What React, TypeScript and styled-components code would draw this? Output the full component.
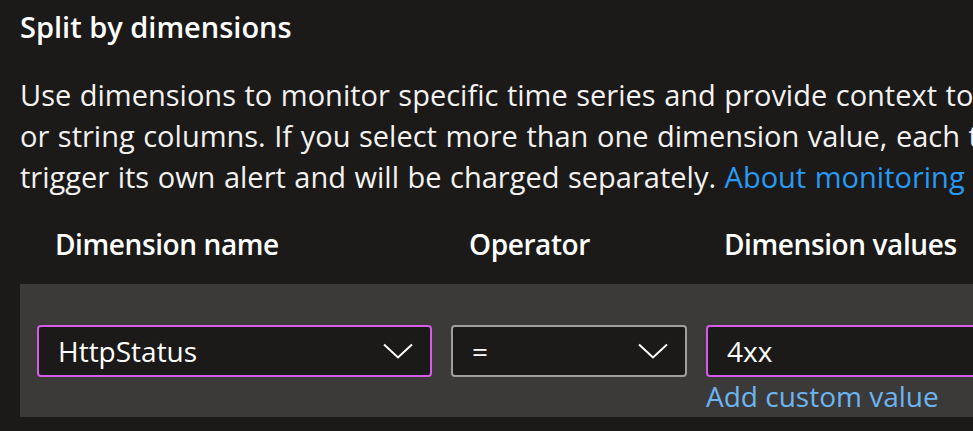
import React from "react";
import styled, { createGlobalStyle } from "styled-components";

const GlobalStyle = createGlobalStyle`
  html, body {
    margin: 0;
    padding: 0;
    background: #1b1a19;
    overflow: hidden;
  }
  body {
    font-family: "Open Sans", "Noto Sans", sans-serif;
    color: #ffffff;
  }
`;

const FS = 29;

const Page = styled.div`
  width: 973px;
  height: 431px;
  overflow: hidden;
  padding: 6px 0 0 20px;
  box-sizing: border-box;
  font-size: ${FS}px;
`;

const Title = styled.h2`
  margin: 0;
  font-size: ${FS}px;
  font-weight: 600;
  line-height: 41px;
  white-space: nowrap;
`;

const Description = styled.p`
  margin: 27px 0 0;
  font-size: ${FS}px;
  line-height: 41px;
  white-space: nowrap;
  color: #f3f2f1;
  word-spacing: 1px;
`;

const Link = styled.a<{ $light?: boolean }>`
  color: ${(p) => (p.$light ? "#6cb4f2" : "#2899f5")};
  text-decoration: none;
  cursor: pointer;
`;

const Grid = styled.div`
  display: grid;
  grid-template-columns: 395px 236px 400px;
  column-gap: 19px;
  padding: 0 17px;
`;

const HeaderRow = styled(Grid)`
  margin-top: 27px;
`;

const HeaderCell = styled.div`
  font-weight: 600;
  font-size: 28px;
  letter-spacing: -0.4px;
  line-height: 41px;
  padding-left: 18px;
  white-space: nowrap;
`;

const Panel = styled.div`
  margin-top: 19px;
  background: #3b3a39;
  height: 133px;
  padding-top: 41px;
  box-sizing: border-box;
`;

const FieldBox = styled.div<{ $focused?: boolean }>`
  height: 52px;
  box-sizing: border-box;
  border: 2px solid ${(p) => (p.$focused ? "#d35ce9" : "#a19f9d")};
  border-radius: 4px;
  background: #1b1a19;
  display: flex;
  align-items: center;
  padding: 0 17px 0 19px;
  line-height: 48px;
  font-size: 28px;
  white-space: nowrap;
`;

const Value = styled.span`
  flex: 1;
  overflow: hidden;
`;

const Column = styled.div`
  display: flex;
  flex-direction: column;
`;

const Helper = styled.div`
  line-height: 38px;
  font-size: 28px;
  white-space: nowrap;
`;

const Chevron = () => (
  <svg width="30" height="16" viewBox="0 0 30 16" fill="none">
    <path d="M1 1.5 L15 14.5 L29 1.5" stroke="#ffffff" strokeWidth="2" />
  </svg>
);

export default function App() {
  return (
    <>
      <GlobalStyle />
      <Page>
        <Title>Split by dimensions</Title>
        <Description>
          Use dimensions to monitor specific time series and provide context to the fired alert. Dimensions can be either number
          <br />
          or string columns. If you select more than one dimension value, each time series that results from the combination will
          <br />
          trigger its own alert and will be charged separately. <Link>About monitoring multiple time series</Link>
        </Description>
        <HeaderRow>
          <HeaderCell>Dimension name</HeaderCell>
          <HeaderCell>Operator</HeaderCell>
          <HeaderCell>Dimension values</HeaderCell>
        </HeaderRow>
        <Panel>
          <Grid>
            <FieldBox $focused>
              <Value>HttpStatus</Value>
              <Chevron />
            </FieldBox>
            <FieldBox>
              <Value>=</Value>
              <Chevron />
            </FieldBox>
            <Column>
              <FieldBox $focused>
                <Value>4xx</Value>
              </FieldBox>
              <Helper>
                <Link $light>Add custom value</Link>
              </Helper>
            </Column>
          </Grid>
        </Panel>
      </Page>
    </>
  );
}
